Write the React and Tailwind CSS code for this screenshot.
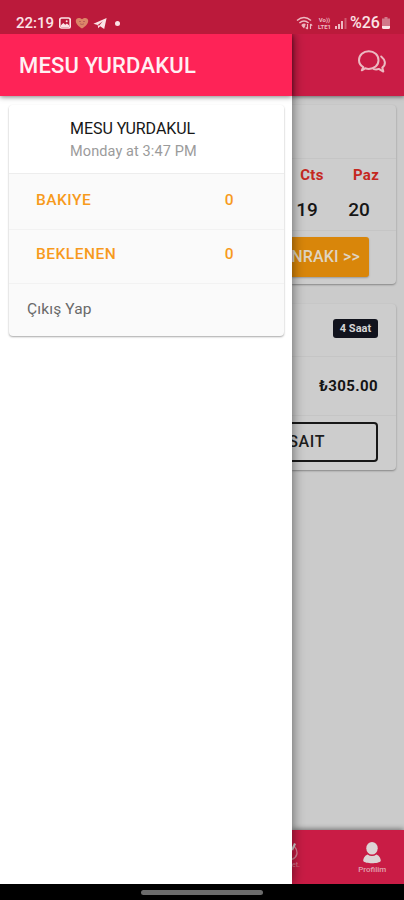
import React from "react";

function StatusBar() {
  return (
    <div className="flex h-[34px] shrink-0 items-start justify-between bg-[#bb1a3b] pt-[14px] pr-[14px] pl-[16px] text-[#fbe3e6]">
      <div className="flex h-[18px] items-center">
        <span className="w-[38px] text-[15px] leading-[18px] font-medium whitespace-nowrap">22:19</span>
        <svg className="ml-[5px]" width="12" height="12" viewBox="0 0 12 12">
          <rect x="0.8" y="1" width="10.4" height="10" rx="1.8" fill="none" stroke="currentColor" strokeWidth="1.7" />
          <path d="M2 10V8.200l2.300-2.100 2 1.600 1.600-1.100L10 8.200V10z" fill="currentColor" />
          <circle cx="7.700" cy="4.200" r="1" fill="currentColor" />
        </svg>
        <svg className="ml-[4px]" width="14" height="12" viewBox="0 0 14 12">
          <path d="M7 11.600C3.500 9.400.800 7 .800 3.800.800 1.200 4.200-.300 7 2.300c2.800-2.600 6.200-1.100 6.200 1.500C13.200 7 10.500 9.400 7 11.600z" fill="#dc8568" />
          <path d="M4 4.500h2M8 4.500h2M5 6.800q2 1.400 4 0" stroke="#b8605a" strokeWidth="1" fill="none" />
        </svg>
        <svg className="ml-[4px]" width="14" height="13" viewBox="0 0 14 13">
          <path d="M.4 6.700 13.600.900 11.200 12 7.100 9.200 5.200 11.300 4.700 8z" fill="currentColor" />
          <path d="m4.800 7.900 5-3.700-3.800 4.500" fill="#bb1a3b" />
        </svg>
        <span className="ml-[8px] h-[5px] w-[5px] rounded-full bg-[#fbe3e6]" />
      </div>
      <div className="flex h-[18px] items-center">
        <svg width="17" height="14" viewBox="0 0 17 14" fill="none" stroke="#edb9c1" strokeWidth="1.500">
          <path d="M1 4.500Q8 -1.500 15 4.500M3.400 7Q8 3 12.600 7M5.700 9.500Q8 7.500 9.500 8.700" />
          <path d="M8 12.500 5.500 9.700Q8 8 9.500 9.500z" fill="#edb9c1" stroke="none" />
          <path d="M11.500 8v5M9.800 11.500l1.700 1.700M14.500 13V8M14.500 8l1.700 1.700" strokeWidth="1.200" />
        </svg>
        <div className="ml-[4px] flex w-[15px] flex-col items-center text-[6px] leading-[7px] font-bold text-[#edb9c1]">
          <span>Vo))</span>
          <span className="whitespace-nowrap">LTE1</span>
        </div>
        <svg className="ml-[3px]" width="12" height="11" viewBox="0 0 12 11">
          <path d="M0 8h2v3H0zM3 6h2v5H3zM6 3h2v8H6z" fill="#edb9c1" />
          <path d="M9.500 0h2v11h-2z" fill="#cf5a70" />
        </svg>
        <span className="ml-[3px] w-[31px] text-[16px] leading-[18px] font-medium tracking-[-0.1px] whitespace-nowrap">%26</span>
        <svg className="ml-[1px]" width="8" height="12" viewBox="0 0 8 12">
          <path d="M2.500 0h3v1.500H8V9H0V1.500h2.500z" fill="#d27789" />
          <path d="M0 9h8v1.500Q8 12 6.500 12h-5Q0 12 0 10.500z" fill="#fbe3e6" />
        </svg>
      </div>
    </div>
  );
}

function BalanceRow({ label, value, className }) {
  return (
    <div className={`flex items-center justify-between border-b border-[#f2f2f2] pr-[50px] pl-[27px] text-[15.5px] font-medium tracking-[0.5px] text-[#f79a1d] ${className}`}>
      <span>{label}</span>
      <span>{value}</span>
    </div>
  );
}

function Drawer() {
  return (
    <aside className="relative z-10 flex w-[292px] shrink-0 flex-col bg-white shadow-[0_0_12px_rgba(0,0,0,0.55)]">
      <header className="flex h-[62px] items-center bg-[#fe2357] pt-[1px] pl-[19px] text-[22px] font-medium tracking-[0.2px] text-[#fff0f3] shadow-[0_1px_5px_rgba(0,0,0,0.5)]">
        <span className="whitespace-nowrap">MESU YURDAKUL</span>
      </header>
      <section className="mt-[9px] ml-[9px] h-[231px] w-[275px] overflow-hidden rounded-[4px] bg-[#fafafa] shadow-[0_1px_2px_rgba(0,0,0,0.35)]">
        <div className="h-[69px] border-b border-[#ededed] bg-white pt-[12px] pl-[61px]">
          <div className="text-[16px] leading-[23px] tracking-[-0.05px] text-[#171717]">MESU YURDAKUL</div>
          <div className="text-[14.5px] leading-[23px] tracking-[0.1px] text-[#9b9b9b]">Monday at 3:47 PM</div>
        </div>
        <BalanceRow label="BAKIYE" value="0" className="h-[56px] pb-[1px]" />
        <BalanceRow label="BEKLENEN" value="0" className="h-[54px] pt-px pb-[5px]" />
        <div className="flex h-[52px] items-center pb-px pl-[18px] text-[15.5px] tracking-[0.15px] text-[#696969]">Çıkış Yap</div>
      </section>
    </aside>
  );
}

function ChatIcon() {
  return (
    <svg width="30" height="25" viewBox="0 0 30 25" fill="none" stroke="#ecb9c1" strokeWidth="2" strokeLinecap="round" strokeLinejoin="round">
      <path d="M4.800 21.300 6.300 18C3.300 16.300 2 14.200 2 11.200 2 6 6.300 2.200 11.800 2.200S21.500 6 21.500 11.200s-4.300 8.700-9.700 8.700c-1.300 0-2.500-.2-3.600-.6z" />
      <path d="M24.200 7.500C28.500 11 29.300 15.500 25.300 18.600l1 4-4.500-2.700c-1.700.7-3.300.7-5 .2" />
    </svg>
  );
}

function Calendar() {
  return (
    <section className="mt-[9px] h-[179px] rounded-r-[4px] bg-[#cdcdcd] shadow-[0_1px_2px_rgba(0,0,0,0.35)]">
      <div className="h-[54px] border-b border-[#c5c5c5]" />
      <div className="h-[72px] border-b border-[#c5c5c5] pt-[6px]">
        <div className="flex text-[15px] leading-[20px] font-bold tracking-[0.3px] text-[#c5281f]">
          <span className="w-[40px] text-center">Cts</span>
          <span className="ml-[14px] w-[40px] text-center">Paz</span>
        </div>
        <div className="mt-[13px] flex text-[19px] leading-[24px] font-medium text-[#161616]">
          <span className="w-[30px] text-center">19</span>
          <span className="ml-[22px] w-[30px] text-center">20</span>
        </div>
      </div>
      <div className="mt-[6px] flex h-[40px] w-[77px] items-center justify-end overflow-hidden rounded-r-[3px] bg-[#d9860a] pr-[9px] text-[16px] font-medium tracking-[0.2px] whitespace-nowrap text-[#dfd4c2] shadow-[0_1px_2px_rgba(0,0,0,0.25)]">
        SONRAKI &gt;&gt;
      </div>
    </section>
  );
}

function Booking() {
  return (
    <section className="mt-[20px] h-[166px] rounded-r-[4px] bg-[#cdcdcd] shadow-[0_1px_2px_rgba(0,0,0,0.35)]">
      <div className="flex h-[53px] justify-end border-b border-[#c5c5c5] pt-[15px] pr-[18px]">
        <span className="flex h-[19px] w-[45px] items-center justify-center rounded-[3px] bg-[#11131d] pt-[2px] text-[11px] font-bold text-[#d5d5d5]">4 Saat</span>
      </div>
      <div className="flex h-[59px] items-center justify-end border-b border-[#c5c5c5] pr-[18px] text-[15px] font-bold tracking-[0.4px] text-[#141414]">₺305.00</div>
      <div className="mt-[6px] flex h-[40px] w-[86px] items-center justify-end overflow-hidden rounded-r-[4px] border-y-2 border-r-2 border-[#171717] pr-[51px] text-[16px] font-medium tracking-[0.6px] whitespace-nowrap text-[#1d1d1d]">
        MÜSAIT
      </div>
    </section>
  );
}

function TabBar() {
  return (
    <nav className="mt-auto flex h-[54px] shrink-0 bg-[#c91c45] text-[#ddc3ca] shadow-[0_-1px_5px_rgba(0,0,0,0.45)]">
      <div className="flex w-[49px] flex-col pt-[12px]">
        <svg width="8" height="19" viewBox="0 0 8 19" fill="none" stroke="#db8497" strokeWidth="1.300">
          <path d="M2.300 4.300Q5.500 8 4.900 12 4 16-.5 17.500" />
          <path d="M0 8 3 1.500" stroke="#ddd4d5" strokeWidth="2.200" />
        </svg>
        <span className="text-[7px] leading-[8px] text-[#dc8396]">et.</span>
      </div>
      <div className="flex w-[64px] flex-col items-center pt-[12px]">
        <svg width="18" height="22" viewBox="0 0 18 22" fill="#ddd4d5">
          <ellipse cx="9" cy="6.300" rx="5.700" ry="6.300" />
          <path d="M4.500 12.500Q9 15.500 13.500 12.500C16.800 14 17.800 16.500 17.800 19 16 22 2 22 .2 19 .2 16.500 1.200 14 4.500 12.500z" />
        </svg>
        <span className="mt-px text-[8px] leading-[10px] font-medium text-[#e2a2b0]">Profilim</span>
      </div>
    </nav>
  );
}

export default function App() {
  return (
    <div className="flex h-[900px] w-[404px] flex-col overflow-hidden bg-[#cbcbcb] font-[Roboto,'Noto_Sans',sans-serif]">
      <StatusBar />
      <div className="flex h-[850px] overflow-hidden">
        <Drawer />
        <main className="flex w-[112px] shrink-0 flex-col bg-[#cbcbcb]">
          <header className="flex h-[62px] shrink-0 justify-end bg-[#c91c45] pt-[15px] pr-[17px] shadow-[0_1px_4px_rgba(0,0,0,0.5)]">
            <ChatIcon />
          </header>
          <div className="pr-[8px]">
            <Calendar />
            <Booking />
          </div>
          <TabBar />
        </main>
      </div>
      <div className="flex h-[16px] justify-center bg-black pt-[6px]">
        <div className="h-[5px] w-[122px] rounded-full bg-[#6b6b6b]" />
      </div>
    </div>
  );
}
